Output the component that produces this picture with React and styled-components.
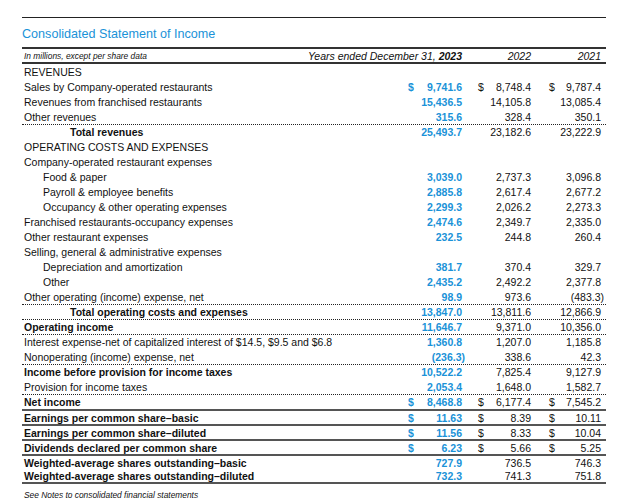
import React from "react";
import styled, { createGlobalStyle } from "styled-components";

const GlobalStyle = createGlobalStyle`
  body {
    margin: 0;
    background: #fff;
    font-family: "Liberation Sans", Arial, sans-serif;
    color: #111;
  }
`;

const BLUE = "#1a92d8";

const Page = styled.div`
  width: 584px;
  margin: 17px 0 0 22px;
  border-top: 1px solid #222;
`;

const Title = styled.h1`
  margin: 0;
  display: flex;
  align-items: center;
  box-sizing: border-box;
  height: 31px;
  padding-top: 2px;
  font-size: 12.6px;
  font-weight: normal;
  color: ${BLUE};
  border-bottom: 2px solid #333;
`;

const Grid = styled.div`
  display: grid;
  grid-template-columns: 1fr 54px 53px 54px;
  column-gap: 16px;
  padding-right: 5px;
`;

const HeaderRow = styled(Grid)`
  height: 13px;
  align-items: end;
  border-bottom: 2px solid #333;
  font-style: italic;
  font-size: 10.5px;
  line-height: 12px;
`;

const Note = styled.span`
  grid-column: 1;
  grid-row: 1;
  font-size: 8.4px;
  padding-left: 2px;
  line-height: 11px;
`;

const YearHead = styled.span`
  grid-row: 1;
  grid-column: ${(p) => p.$col};
  justify-self: end;
  white-space: nowrap;
  b {
    font-weight: bold;
  }
`;

const Row = styled(Grid)`
  height: 15px;
  box-sizing: border-box;
  align-items: center;
  font-size: 10.5px;
  border-top: ${(p) =>
    p.$rule === "dot"
      ? "1px dotted #222"
      : p.$rule === "solid"
      ? "2px solid #555"
      : "none"};
  border-bottom: ${(p) => (p.$last ? "2px solid #555" : "none")};
`;

const Label = styled.span`
  padding-left: ${(p) => 2 + (p.$indent || 0)}px;
  font-weight: ${(p) => (p.$bold ? "bold" : "normal")};
  white-space: nowrap;
`;

const Value = styled.span`
  display: flex;
  justify-content: space-between;
  white-space: nowrap;
  color: ${(p) => (p.$current ? BLUE : "#111")};
  font-weight: ${(p) => (p.$current ? "bold" : "normal")};

  &:nth-child(4) {
    margin-left: 2px;
  }
`;

const Footnote = styled.p`
  margin: 6px 0 0 2px;
  font-size: 8.4px;
  font-style: italic;
`;

const rows = [
  { label: "REVENUES" },
  { label: "Sales by Company-operated restaurants", v: ["9,741.6", "8,748.4", "9,787.4"], dollar: true },
  { label: "Revenues from franchised restaurants", v: ["15,436.5", "14,105.8", "13,085.4"] },
  { label: "Other revenues", v: ["315.6", "328.4", "350.1"] },
  { label: "Total revenues", v: ["25,493.7", "23,182.6", "23,222.9"], bold: true, indent: 46, rule: "dot" },
  { label: "OPERATING COSTS AND EXPENSES" },
  { label: "Company-operated restaurant expenses" },
  { label: "Food & paper", v: ["3,039.0", "2,737.3", "3,096.8"], indent: 19 },
  { label: "Payroll & employee benefits", v: ["2,885.8", "2,617.4", "2,677.2"], indent: 19 },
  { label: "Occupancy & other operating expenses", v: ["2,299.3", "2,026.2", "2,273.3"], indent: 19 },
  { label: "Franchised restaurants-occupancy expenses", v: ["2,474.6", "2,349.7", "2,335.0"] },
  { label: "Other restaurant expenses", v: ["232.5", "244.8", "260.4"] },
  { label: "Selling, general & administrative expenses" },
  { label: "Depreciation and amortization", v: ["381.7", "370.4", "329.7"], indent: 19 },
  { label: "Other", v: ["2,435.2", "2,492.2", "2,377.8"], indent: 19 },
  { label: "Other operating (income) expense, net", v: ["98.9", "973.6", "(483.3)"], paren: true },
  { label: "Total operating costs and expenses", v: ["13,847.0", "13,811.6", "12,866.9"], bold: true, indent: 46, rule: "dot" },
  { label: "Operating income", v: ["11,646.7", "9,371.0", "10,356.0"], bold: true, rule: "dot" },
  { label: "Interest expense-net of capitalized interest of $14.5, $9.5 and $6.8", v: ["1,360.8", "1,207.0", "1,185.8"], rule: "dot" },
  { label: "Nonoperating (income) expense, net", v: ["(236.3)", "338.6", "42.3"], paren: true },
  { label: "Income before provision for income taxes", v: ["10,522.2", "7,825.4", "9,127.9"], bold: true, rule: "dot" },
  { label: "Provision for income taxes", v: ["2,053.4", "1,648.0", "1,582.7"] },
  { label: "Net income", v: ["8,468.8", "6,177.4", "7,545.2"], bold: true, dollar: true, rule: "dot" },
  { label: "Earnings per common share\u2013basic", v: ["11.63", "8.39", "10.11"], bold: true, dollar: true, rule: "solid" },
  { label: "Earnings per common share\u2013diluted", v: ["11.56", "8.33", "10.04"], bold: true, dollar: true, rule: "solid" },
  { label: "Dividends declared per common share", v: ["6.23", "5.66", "5.25"], bold: true, dollar: true, rule: "solid" },
  { label: "Weighted-average shares outstanding\u2013basic", v: ["727.9", "736.5", "746.3"], bold: true, rule: "solid" },
  { label: "Weighted-average shares outstanding\u2013diluted", v: ["732.3", "741.3", "751.8"], bold: true, last: true },
];

function Amount({ value, dollar, current, paren }) {
  return (
    <Value $current={current}>
      <span>{dollar ? "$" : ""}</span>
      <span style={paren && value.startsWith("(") ? { marginRight: "-3px" } : undefined}>{value}</span>
    </Value>
  );
}

export default function App() {
  return (
    <>
      <GlobalStyle />
      <Page>
        <Title>Consolidated Statement of Income</Title>
        <HeaderRow>
          <Note>In millions, except per share data</Note>
          <YearHead $col="1 / 3">
            Years ended December 31, <b>2023</b>
          </YearHead>
          <YearHead $col="3">2022</YearHead>
          <YearHead $col="4">2021</YearHead>
        </HeaderRow>
        {rows.map((r, i) => (
          <Row key={i} $rule={r.rule} $last={r.last}>
            <Label $bold={r.bold} $indent={r.indent}>{r.label}</Label>
            {r.v &&
              r.v.map((val, j) => (
                <Amount key={j} value={val} dollar={r.dollar} current={j === 0} paren={r.paren} />
              ))}
          </Row>
        ))}
        <Footnote>See Notes to consolidated financial statements</Footnote>
      </Page>
    </>
  );
}
